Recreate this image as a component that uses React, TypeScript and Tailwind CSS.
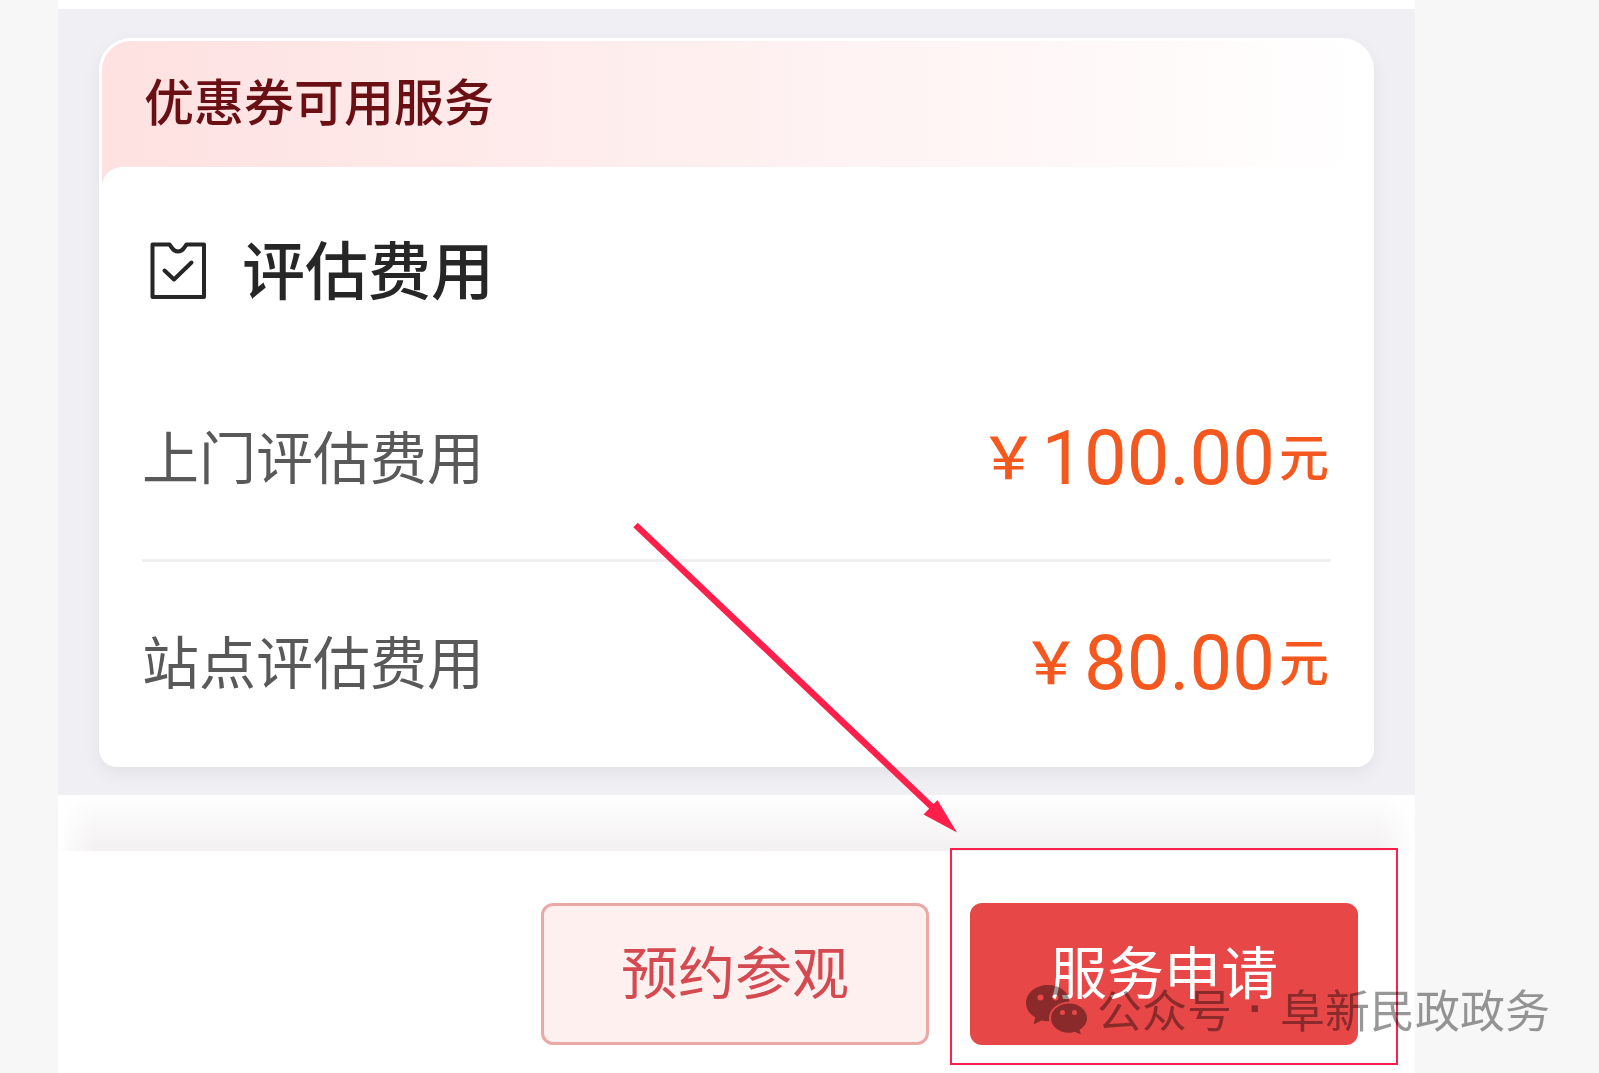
import React from "react";

const FEES = [
  { label: "上门评估费用", amount: "100.00" },
  { label: "站点评估费用", amount: "80.00" },
];

function CouponIcon() {
  return (
    <svg
      className="h-[58px] w-[58px] shrink-0"
      viewBox="0 0 58 58"
      fill="none"
      stroke="#262626"
      strokeWidth="4"
      strokeLinecap="round"
      strokeLinejoin="round"
      aria-hidden="true"
    >
      <path d="M2.500 2.500H19.500L22 6Q24.500 9.500 28 9.500T34 6L36.500 2.500H54V55H2.500Z" />
      <path d="M14.500 28.500L24 37.500L41.500 20.500" />
    </svg>
  );
}

function WechatIcon() {
  return (
    <svg className="h-[56px] w-[62px] shrink-0" viewBox="0 0 62 56" fill="#000" aria-hidden="true">
      <path
        fillRule="evenodd"
        d="M22 0C34 0 42.500 7 43.500 16.500C32 17 23 24 23 33.500C23 34.700 23.100 35.400 23.300 36.300C20.500 36.500 18 36.200 15.500 35.600L7.500 39.500L9.300 32.500C3.500 29 0 24 0 18C0 8 10 0 22 0ZM14.500 9.500A3 3 0 1 0 14.500 15.500A3 3 0 1 0 14.500 9.500ZM29.500 9.500A3 3 0 1 0 29.500 15.500A3 3 0 1 0 29.500 9.500Z"
      />
      <path
        fillRule="evenodd"
        d="M43 18.500C53 18.500 61 25 61 33.300C61 38.500 58 42 53.500 45L55 49.500L48.500 46.800C46.500 47.500 45 47.800 43 47.800C33 47.800 25 41.500 25 33.300C25 25 33 18.500 43 18.500ZM36.500 25A2.500 2.500 0 1 0 36.500 30A2.500 2.500 0 1 0 36.500 25ZM48.500 25A2.500 2.500 0 1 0 48.500 30A2.500 2.500 0 1 0 48.500 25Z"
      />
    </svg>
  );
}

function FeeRow({ label, amount }: { label: string; amount: string }) {
  return (
    <li className="flex items-center justify-between py-[57px] leading-[88px]">
      <span className="-my-1 pb-2 text-[57px] text-[#595959]">{label}</span>
      <span className="flex items-center pr-0.5 text-[#f4581f]">
        <span className="-my-1 mr-1 pb-2 text-[58px] font-medium">￥</span>
        <span className="mr-1 font-[Roboto,sans-serif] text-[76px]">{amount}</span>
        <span className="-my-1 pb-2 text-[50px] font-medium">元</span>
      </span>
    </li>
  );
}

export default function App() {
  return (
    <div className="min-h-screen overflow-hidden bg-[#f7f7f7] font-['Noto_Sans_CJK_SC',sans-serif]">
      <div className="mr-[184px] ml-[58px] bg-white pt-[9px]">
        <main className="bg-[#efeff4] px-[41px] pt-[29px] pb-7">
          <section className="rounded-t-[32px] rounded-b-[18px] bg-white p-[3px] shadow-[0_6px_18px_rgba(0,0,0,0.06)]">
            <header className="rounded-t-[29px] bg-linear-to-r from-[#fee1e1] to-white px-[42px] pt-5 pb-[50px]">
              <h1 className="text-[50px] font-medium leading-[76px] text-[#6a1015]">优惠券可用服务</h1>
            </header>
            <div className="-mt-5 rounded-t-[20px] rounded-b-[15px] bg-white px-10 pt-[60px]">
              <h2 className="flex items-center gap-[34px] pl-2 text-[63px] font-medium leading-[88px] text-[#262626]">
                <CouponIcon />
                <span className="-my-1 pb-2">评估费用</span>
              </h2>
              <ul className="mt-[42px] divide-y-[3px] divide-[#f0f0f0]">
                {FEES.map((fee) => (
                  <FeeRow key={fee.label} label={fee.label} amount={fee.amount} />
                ))}
              </ul>
            </div>
          </section>
        </main>

        <div className="h-14 bg-linear-to-b from-white to-[#f3f0f1] [mask-image:linear-gradient(to_right,transparent,black_36px,black_calc(100%-36px),transparent)]" />

        <footer className="relative flex justify-end gap-[41px] bg-white pt-[52px] pr-[57px] pb-7">
          <button
            type="button"
            className="h-[142px] w-[388px] rounded-xl border-[3px] border-[#eaa8a6] bg-[#fef0ef] pb-2.5 text-[57px] leading-[84px] text-[#d54a50]"
          >
            预约参观
          </button>
          <div className="relative">
            <button
              type="button"
              className="h-[142px] w-[388px] rounded-xl bg-[#e84747] pb-2.5 text-[57px] leading-[84px] text-white"
            >
              服务申请
            </button>
            <div className="pointer-events-none absolute -top-[55px] -right-10 -bottom-5 -left-5 border-2 border-[#ff1f4b]" />
            <svg
              className="pointer-events-none absolute -top-[383px] -left-[340px] h-[320px] w-[330px]"
              viewBox="0 0 330 320"
              aria-hidden="true"
            >
              <path d="M5.500 5L302 287" stroke="#ff1f4b" strokeWidth="6.5" />
              <path d="M293.500 294.500L307.500 280L327 312.500Z" fill="#ff1f4b" />
            </svg>
            <div className="pointer-events-none absolute top-[74px] left-14 flex items-center gap-[9px] whitespace-nowrap text-[45px] leading-[64px] text-black opacity-40">
              <WechatIcon />
              <span className="flex pb-2">
                公众号
                <span className="w-12 text-center font-bold font-['Liberation_Sans',sans-serif]">·</span>
                阜新民政政务
              </span>
            </div>
          </div>
        </footer>
      </div>
    </div>
  );
}
